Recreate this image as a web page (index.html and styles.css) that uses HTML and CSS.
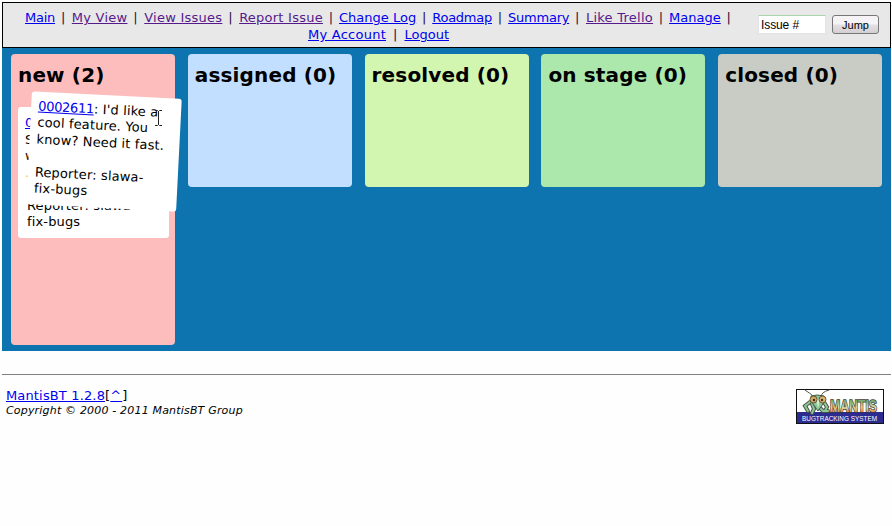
FILE: index.html
```html
<!DOCTYPE html>
<html lang="en">
<head>
<meta charset="utf-8">
<title>MantisBT</title>
<link rel="stylesheet" href="styles.css">
</head>
<body>
<header class="menu">
  <nav class="links">
    <div class="row first"><a class="tight" href="#">Main</a><i>|</i><a class="seen wide" href="#">My View</a><i>|</i><a class="seen wide" href="#">View Issues</a><i>|</i><a class="seen wide" href="#">Report Issue</a><i>|</i><a href="#">Change Log</a><i>|</i><a class="tight" href="#">Roadmap</a><i>|</i><a class="tight" href="#">Summary</a><i>|</i><a class="seen wide" href="#">Like Trello</a><i>|</i><a href="#">Manage</a><i>|</i></div>
    <div class="row second"><a class="wide" href="#">My Account</a><i>|</i><a href="#">Logout</a></div>
  </nav>
  <form class="jump"><input type="text" value="Issue #" aria-label="Issue number"><button type="button">Jump</button></form>
</header>
<main class="board">
  <section class="column new">
    <h2>new (2)</h2>
    <article class="card"><a href="#">0</a><br>S<br>w<br><span class="mark">.</span><br><br><div class="reporter">Reporter: slawa-<br>fix-bugs</div></article>
    <article class="card dragged"><a href="#">0002611</a>: I'd like a<br>cool feature. You<br>know? Need it fast.<br><br>Reporter: slawa-<br>fix-bugs</article>
    <svg class="cursor" width="7" height="16" viewBox="0 0 7 16"><path d="M0 .5h2.500l1 1 1-1H7M3.500 1v14M0 15.500h2.500l1-1 1 1H7" fill="none" stroke="#222"/></svg>
  </section>
  <section class="column assigned"><h2>assigned (0)</h2></section>
  <section class="column resolved"><h2>resolved (0)</h2></section>
  <section class="column stage"><h2>on stage (0)</h2></section>
  <section class="column closed"><h2>closed (0)</h2></section>
</main>
<footer class="footer">
  <div>
    <div class="version"><a href="#">MantisBT 1.2.8</a>[<a class="up" href="#">^</a>]</div>
    <div class="copyright">Copyright © 2000 - 2011 MantisBT Group</div>
  </div>
  <svg class="logo" width="88" height="35" viewBox="0 0 88 35">
    <defs><linearGradient id="gold" x1="0" y1="0" x2="0" y2="1"><stop offset=".2" stop-color="#7dab70"/><stop offset=".55" stop-color="#e0dbaa"/><stop offset=".85" stop-color="#e08a3c"/></linearGradient></defs>
    <rect x=".5" y=".5" width="87" height="34" fill="#fff" stroke="#111"/>
    <rect x="1" y="23" width="86" height="11" fill="#2b2b91"/>
    <g fill="none" stroke="#4c5545" stroke-linecap="round">
      <path d="M18 8Q14 4 9 1M25 8Q25 3 33 1"/>
      <path d="M14 13 9 17 12 22M16 15 18 20 16 24M28 13 31 18 29 22M24 19 27 22 32 22" stroke-width="4"/>
      <path d="M14 13 9 17 12 22M16 15 18 20 16 24M28 13 31 18 29 22M24 19 27 22 32 22" stroke="#8cc79b" stroke-width="2"/>
    </g>
    <path d="M15 7Q21 5 28 7L27 15 22 22 17 15Z" fill="#8cc79b" stroke="#46594b"/>
    <path d="M20 10 22 19 24 10Z" fill="#d6edcb"/>
    <ellipse cx="17.500" cy="10.500" rx="3.500" ry="3.500" fill="#d5a85e" stroke="#65593b"/>
    <ellipse cx="26.500" cy="10.500" rx="3.500" ry="3.500" fill="#d9b66e" stroke="#65593b"/>
    <circle cx="18" cy="11" r="1.200" fill="#333"/><circle cx="26" cy="11" r="1.200" fill="#333"/>
    <text class="logo-name" x="34" y="23" textLength="47" lengthAdjust="spacingAndGlyphs">MANTIS</text>
    <text class="logo-sub" x="6" y="32" textLength="75" lengthAdjust="spacingAndGlyphs">BUGTRACKING SYSTEM</text>
  </svg>
</footer>
</body>
</html>
```
FILE: styles.css
```css
* { box-sizing: border-box; }
body {
  margin: 0;
  padding: 2px 1px 0 2px;
  height: 526px;
  overflow: hidden;
  background: #fefefe;
  color: #000;
  font: 13px/17px Verdana, "DejaVu Sans", sans-serif;
}
a { color: #0000ee; }
a.seen { color: #551a8b; }
.menu {
  display: flex;
  justify-content: space-between;
  height: 46px;
  border: 1px solid #000;
  background: #e8e8e8;
}
.links { padding: 6px 0 0 22px; }
.row { display: flex; justify-content: space-between; white-space: nowrap; }
.row i { font-style: normal; color: #2b0a3d; }
.first { width: 706px; }
.second { width: 141px; margin-left: 283px; }
.row .wide { letter-spacing: .25px; }
.row .tight { letter-spacing: -.25px; }
.first .wide { margin-left: .700px; }
.jump { display: flex; padding: 12px 11px 0 0; gap: 6px; }
.jump input {
  width: 68px;
  height: 19px;
  padding: 1px 2px 0;
  border: 1px solid #e3e3e3;
  border-top-color: #a8d5ac;
  background: #fff;
  color: #000;
  font: 12px/16px "Liberation Sans", sans-serif;
  letter-spacing: -.1px;
}
.jump button {
  width: 47px;
  height: 19px;
  padding: 0;
  border: 1px solid #777;
  border-radius: 3px;
  background: linear-gradient(#f5f3f5 0 48%, #e4dfe3 52%, #d4cfd3);
  color: #000;
  font: 11px/16px "Liberation Sans", sans-serif;
}
.board {
  display: grid;
  grid-template-columns: repeat(5, 164px);
  column-gap: 12.800px;
  align-items: start;
  height: 303px;
  padding: 6px 9px;
  background: #0e74af;
}
.column { position: relative; height: 133px; padding: 7px; border-radius: 4px; }
.new { height: 291px; background: #fdbdbd; }
.assigned { background: #c2dfff; }
.resolved { background: #d2f5b0; }
.stage { background: #ace7ac; }
.closed { background: #c9ccc4; }
h2 { margin: 0; font-size: 20px; line-height: 28px; letter-spacing: .15px; white-space: nowrap; }
.card {
  width: 151px;
  height: 131px;
  margin-top: 18px;
  padding: 8px 7px;
  border-radius: 3px;
  background: #fff;
  line-height: 16.500px;
  letter-spacing: .15px;
  white-space: nowrap;
}
.reporter { padding-left: 2px; }
.mark { color: #e9b45c; }
.dragged {
  position: absolute;
  left: 18px;
  top: 40.500px;
  width: 150px;
  height: 113px;
  margin: 0;
  padding: 6.500px 7px;
  transform: rotate(2.900deg);
  z-index: 2;
}
.dragged a { letter-spacing: -.3px; }
.cursor { position: absolute; left: 144px; top: 56px; z-index: 3; }
.footer {
  display: flex;
  justify-content: space-between;
  margin-top: 23px;
  padding: 12px 7px 0 4px;
  border-top: 1px solid #808080;
}
.version { height: 16px; line-height: 17px; letter-spacing: .15px; }
.version .up { letter-spacing: 1px; }
.copyright { font-size: 11px; line-height: 15px; font-style: italic; letter-spacing: .18px; }
.logo { margin-top: 2px; }
.logo-name { font: bold 16px "Liberation Sans", sans-serif; fill: url(#gold); stroke: #403a2c; stroke-width: 1.500px; paint-order: stroke; }
.logo-sub { font: 8px "Liberation Sans", sans-serif; fill: #fff; }
```
